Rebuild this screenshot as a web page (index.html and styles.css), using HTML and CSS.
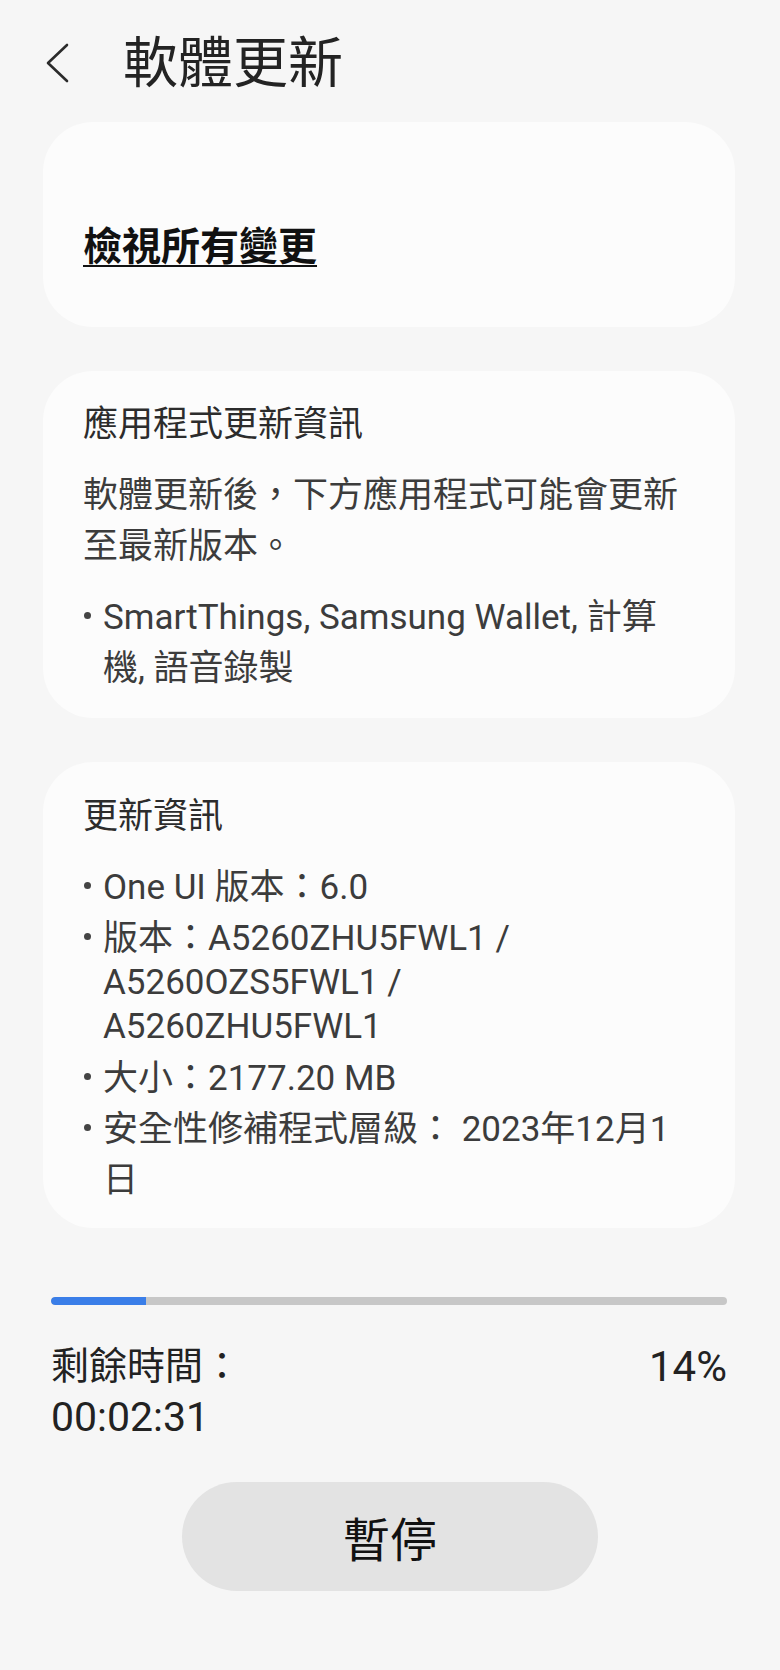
FILE: index.html
```html
<!DOCTYPE html>
<html lang="zh-Hant">
<head>
<meta charset="utf-8">
<title>軟體更新</title>
<link rel="stylesheet" href="styles.css">
</head>
<body>
<div class="screen">
  <header class="topbar">
    <svg class="back" width="26" height="40" viewBox="0 0 26 40" aria-hidden="true">
      <path d="M22 2 L3 20 L22 38" fill="none" stroke="#2b2b2b" stroke-width="2.6" stroke-linecap="round" stroke-linejoin="round"/>
    </svg>
    <h1 class="title">軟體更新</h1>
  </header>

  <section class="card card-link">
    <a class="all-changes" href="#">檢視所有變更</a>
  </section>

  <section class="card card-apps">
    <h2 class="card-head">應用程式更新資訊</h2>
    <p class="para">軟體更新後，下方應用程式可能會更新至最新版本。</p>
    <ul class="bullets">
      <li>SmartThings, Samsung Wallet, 計算機, 語音錄製</li>
    </ul>
  </section>

  <section class="card card-info">
    <h2 class="card-head">更新資訊</h2>
    <ul class="bullets">
      <li>One UI 版本：6.0</li>
      <li>版本：A5260ZHU5FWL1 /<span class="cont">A5260OZS5FWL1 /<br>A5260ZHU5FWL1</span></li>
      <li>大小：2177.20 MB</li>
      <li>安全性修補程式層級： 2023年12月1日</li>
    </ul>
  </section>

  <div class="progress">
    <div class="progress-fill" style="width:14%"></div>
  </div>

  <div class="status">
    <div class="remain">剩餘時間：<br><span class="time">00:02:31</span></div>
    <div class="percent">14%</div>
  </div>

  <div class="actions">
    <button class="pause" type="button">暫停</button>
  </div>
</div>
</body>
</html>
```

FILE: styles.css
```css
html, body {
  margin: 0;
  padding: 0;
  background: #f6f6f6;
}

body {
  font-family: Roboto, "Noto Sans CJK TC", sans-serif;
  color: #3a3a3a;
  width: 780px;
  height: 1670px;
  overflow: hidden;
}

.screen {
  display: flex;
  flex-direction: column;
}

.topbar {
  display: flex;
  align-items: center;
  height: 72px;
  padding-top: 27px;
  margin-bottom: 23px;
}

.back {
  margin-left: 45px;
  flex: none;
}

.title {
  margin: 0 0 0 52px;
  font-size: 55px;
  font-weight: 400;
  line-height: 72px;
  color: #232323;
}

.card {
  background: #fcfcfc;
  border-radius: 50px;
  margin: 0 45px 0 43px;
  padding: 28px 52px 24px 40px;
}

.card + .card {
  margin-top: 44px;
}

.card-link {
  padding-top: 100px;
  padding-bottom: 55px;
}

.card-info {
  padding-top: 29px;
  padding-bottom: 22px;
}

.all-changes {
  display: block;
  font-size: 39px;
  line-height: 50px;
  font-weight: 700;
  color: #111;
  text-decoration: underline;
  text-decoration-thickness: 2px;
  text-underline-offset: 5px;
}

.card-head {
  margin: 0;
  font-size: 35px;
  font-weight: 400;
  line-height: 51px;
  color: #2c2c2c;
}

.para {
  margin: 20px 0 0;
  font-size: 35px;
  line-height: 51px;
  color: #3c3c3c;
}

.bullets {
  list-style: none;
  margin: 20px 0 0;
  padding: 0;
  font-size: 35px;
  line-height: 51px;
  color: #3c3c3c;
}

.bullets li {
  position: relative;
  padding-left: 20px;
}

.bullets li::before {
  content: "";
  position: absolute;
  left: 1px;
  top: 20px;
  width: 7px;
  height: 7px;
  border-radius: 50%;
  background: #444;
}

.cont {
  display: block;
  line-height: 44px;
  margin-top: -3px;
  margin-bottom: 4px;
}

.progress {
  margin: 69px 53px 0 51px;
  height: 8px;
  border-radius: 4px;
  background: #c7c7c7;
  overflow: hidden;
}

.progress-fill {
  height: 100%;
  background: #3a7ee8;
  border-radius: 4px 0 0 4px;
}

.status {
  display: flex;
  justify-content: space-between;
  align-items: flex-start;
  margin: 36px 53px 0 51px;
  font-size: 38px;
  line-height: 51px;
  color: #222;
}

.time {
  font-size: 41px;
}

.percent {
  font-size: 42px;
}

.actions {
  display: flex;
  justify-content: center;
  margin-top: 38px;
}

.pause {
  width: 416px;
  height: 109px;
  border: none;
  border-radius: 55px;
  background: #e3e3e3;
  font-family: Roboto, "Noto Sans CJK TC", sans-serif;
  font-size: 47px;
  color: #111;
}
```
